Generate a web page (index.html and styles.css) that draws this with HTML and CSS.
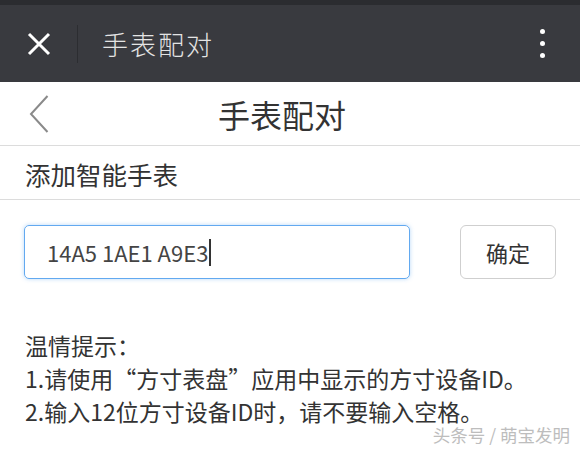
FILE: index.html
```html
<!DOCTYPE html>
<html lang="zh-CN">
<head>
    <meta charset="utf-8">
    <title>手表配对</title>
    <link rel="stylesheet" href="styles.css">
</head>
<body>
    <div class="status"></div>
    <div class="header">
        <svg class="close" width="24" height="24" viewBox="0 0 24 24">
            <path d="M2 2 L22 22 M22 2 L2 22" stroke="#fff" stroke-width="3" fill="none"/>
        </svg>
        <span class="divider"></span>
        <span class="header-title">手表配对</span>
        <span class="dots"><i></i><i></i><i></i></span>
    </div>

    <div class="nav">
        <svg class="back" width="20" height="38" viewBox="0 0 20 38">
            <polyline points="18.5,1 2,19 18.5,37" stroke="#8a8a8a" stroke-width="2" fill="none"/>
        </svg>
        <span class="nav-title">手表配对</span>
    </div>

    <div class="section">添加智能手表</div>

    <div class="form">
        <div class="field">14A5 1AE1 A9E3<span class="caret"></span></div>
        <button class="ok">确定</button>
    </div>

    <div class="tips">
        <p>温情提示：</p>
        <p>1.请使用“方寸表盘”应用中显示的方寸设备ID。</p>
        <p>2.输入12位方寸设备ID时，请不要输入空格。</p>
    </div>

    <div class="mark">头条号 / 萌宝发明</div>
</body>
</html>
```

FILE: styles.css
```css
body { margin: 0; width: 580px; height: 452px; position: relative; overflow: hidden; background: #fff; font-family: "Noto Sans CJK SC", "Noto Sans", sans-serif; color: #333; }

.status { height: 5px; background: #2b2c30; }
.header { height: 77px; background: #393a3f; display: flex; align-items: center; padding-left: 27px; }
.divider { width: 1px; height: 38px; background: #2c2d31; margin-left: 26px; }
.header-title { margin-left: 24px; font-size: 26px; font-weight: 300; letter-spacing: 2px; color: #e4e4e4; }
.dots { margin-left: auto; margin-right: 35px; display: flex; flex-direction: column; gap: 7px; }
.dots i { display: block; width: 5px; height: 5px; border-radius: 50%; background: #fff; }

.nav { height: 63px; display: flex; align-items: center; padding-left: 29px; border-bottom: 1px solid #dcdcdc; }
.nav-title { margin-left: 169px; font-size: 32px; color: #333; }

.section { height: 54px; padding-left: 25px; padding-top: 2px; box-sizing: border-box; display: flex; align-items: center; font-size: 25.5px; border-bottom: 1px solid #dcdcdc; }

.form { display: flex; padding: 25px 0 0 24px; }
.field { width: 386px; height: 54px; box-sizing: border-box; border: 1px solid #62a9f0; border-radius: 5px; box-shadow: 0 0 4px rgba(98, 169, 240, 0.45); display: flex; align-items: center; padding-left: 22px; font-size: 22px; color: #444; }
.caret { width: 2px; height: 27px; background: #333; margin-left: 1px; }
.ok { margin-left: 50px; width: 96px; height: 54px; border: 1px solid #cfcfcf; border-radius: 6px; background: #fff; font-family: inherit; font-size: 22px; color: #333; padding: 0; }

.tips { margin-top: 50px; padding-left: 25px; font-size: 23px; line-height: 33px; }
.tips p { margin: 0; }

.mark { position: absolute; right: 10px; bottom: 5px; font-size: 17.5px; color: #bdbdbd; }
```
